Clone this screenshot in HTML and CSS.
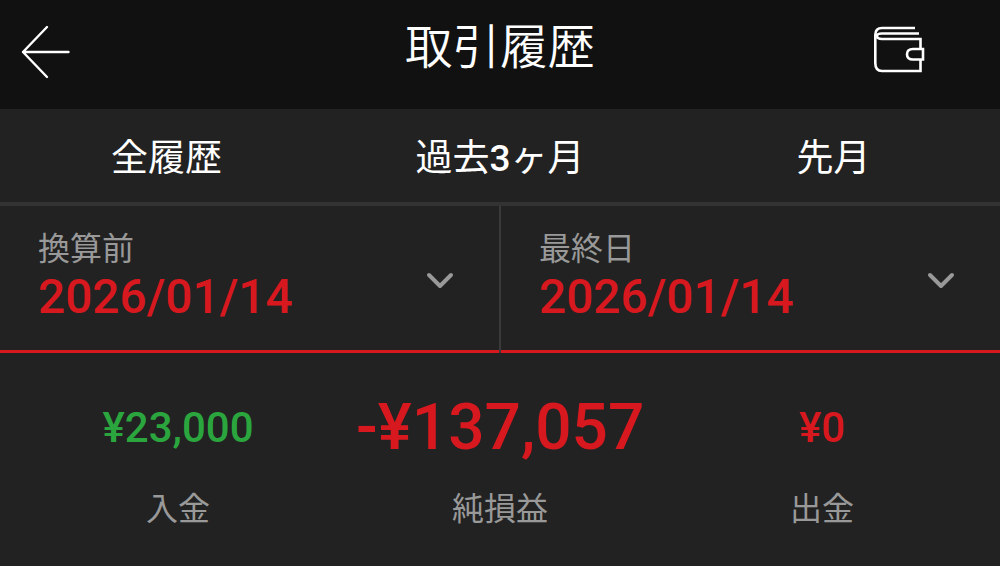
FILE: index.html
```html
<!DOCTYPE html>
<html lang="ja">
<head>
    <meta charset="UTF-8">
    <meta name="viewport" content="width=device-width, initial-scale=1.0">
    <title>取引履歴</title>
    <link rel="stylesheet" href="styles.css">
</head>
<body>
    <header class="top-bar">
        <svg class="back-icon" width="50" height="54" viewBox="0 0 50 54">
            <path d="M47.500 27H2M26 2L2 27L26 52" fill="none" stroke="#fff" stroke-width="2.4" stroke-linecap="round" stroke-linejoin="round"/>
        </svg>
        <h1>取引履歴</h1>
        <svg class="wallet-icon" width="52" height="48" viewBox="0 0 52 48">
            <path d="M42 2H9Q2.300 2 2.300 9V37Q2.300 45 9 45H47.500V13H9Q4 13 4 10Q4 7.500 9 7.500H46" fill="none" stroke="#fff" stroke-width="2.600"/>
            <path d="M50 23H40Q34 23 34 28.250Q34 33.500 40 33.500H50Z" fill="#111" stroke="#fff" stroke-width="2.600"/>
        </svg>
    </header>

    <nav class="tabs">
        <div>全履歴</div>
        <div>過去<span class="tab-num">3</span>ヶ月</div>
        <div>先月</div>
    </nav>

    <section class="filters">
        <div class="filter">
            <div class="filter-text">
                <p class="filter-label">換算前</p>
                <p class="filter-date">2026/01/14</p>
            </div>
            <svg class="chevron" width="28" height="18" viewBox="0 0 28 18">
                <path d="M3 3L14 14L25 3" fill="none" stroke="#999" stroke-width="4" stroke-linecap="round" stroke-linejoin="round"/>
            </svg>
        </div>
        <div class="filter">
            <div class="filter-text">
                <p class="filter-label">最終日</p>
                <p class="filter-date">2026/01/14</p>
            </div>
            <svg class="chevron" width="28" height="18" viewBox="0 0 28 18">
                <path d="M3 3L14 14L25 3" fill="none" stroke="#999" stroke-width="4" stroke-linecap="round" stroke-linejoin="round"/>
            </svg>
        </div>
    </section>

    <section class="summary">
        <div class="stat">
            <div class="amount green">¥23,000</div>
            <div class="stat-label">入金</div>
        </div>
        <div class="stat">
            <div class="amount big red">-¥137,057</div>
            <div class="stat-label">純損益</div>
        </div>
        <div class="stat">
            <div class="amount red">¥0</div>
            <div class="stat-label">出金</div>
        </div>
    </section>
</body>
</html>
```

FILE: styles.css
```css
body {
    margin: 0;
    height: 566px;
    overflow: hidden;
    background-color: #222;
    color: #fff;
    font-family: Roboto, "Noto Sans CJK JP", sans-serif;
}
p {
    margin: 0;
}
.top-bar {
    height: 109px;
    background-color: #111;
    display: grid;
    grid-template-columns: 1fr auto 1fr;
    align-items: center;
    padding: 0 75px 6px 21px;
    box-sizing: border-box;
}
.top-bar h1 {
    margin: 0 0 6px 54px;
    font-size: 47.500px;
    font-weight: 350;
    line-height: 1;
}
.wallet-icon {
    justify-self: end;
    margin-bottom: 4px;
}
.tabs {
    height: 93px;
    display: grid;
    grid-template-columns: 333px 334px 333px;
    align-items: center;
    text-align: center;
    font-size: 37px;
    border-bottom: 4px solid #333;
}
.tabs div {
    margin-bottom: 2px;
}
.tab-num {
    font-weight: 500;
}
.filters {
    display: grid;
    grid-template-columns: 499px 499px;
    column-gap: 2px;
    height: 147px;
    background-color: #3a3a3a;
}
.filter {
    display: flex;
    justify-content: space-between;
    align-items: center;
    padding: 0 45px 0 38px;
    background-color: #222;
    border-bottom: 3px solid #d7191f;
}
.filter-text {
    padding-top: 3px;
}
.filter-label {
    color: #999;
    font-size: 32px;
    line-height: 35px;
}
.filter-date {
    color: #d7191f;
    font-size: 47.800px;
    font-weight: 500;
    line-height: 61px;
}
.chevron {
    margin-top: 6px;
}
.summary {
    display: grid;
    grid-template-columns: 356px 288px 356px;
    text-align: center;
}
.amount {
    height: 88px;
    margin-top: 31px;
    line-height: 88px;
    font-size: 42px;
    font-weight: 500;
    white-space: nowrap;
}
.amount.big {
    font-size: 64px;
}
.green {
    color: #2ba63e;
}
.red {
    color: #d7191f;
}
.stat-label {
    color: #999;
    font-size: 32px;
    line-height: 40px;
    margin-top: 17px;
}
```
